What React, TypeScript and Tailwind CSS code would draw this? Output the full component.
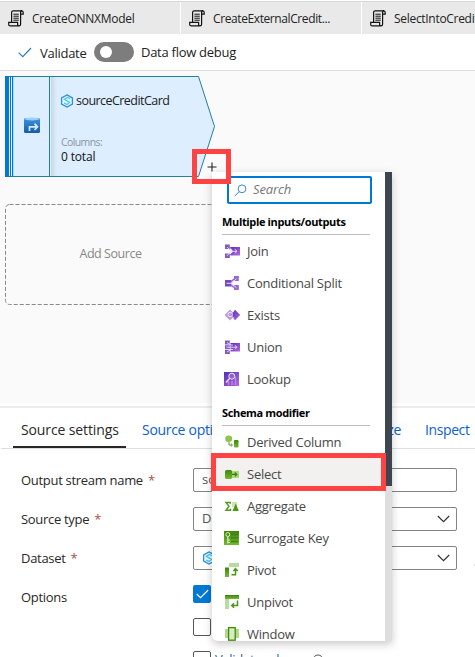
import React from "react";

function ScrollIcon() {
  return (
    <svg width="16" height="17" viewBox="0 0 16 17" className="shrink-0" fill="none" stroke="#111" strokeWidth="1.2">
      <path d="M3.6 12V2.6Q3.6 .9 5.2.9H13.6Q15.2.9 15.2 2.4V4.2H12.6V14.2Q12.6 15.9 11 15.9H2.2Q.7 15.9.7 14.4V12.4H9.6V14.4Q9.7 15.9 11 15.9M12.6 4.2V2.2Q12.8 1 13.8.9" />
      <path d="M5.4 4.2H10.8M5.4 6.2H10.8M5.4 8.2H10.8M5.4 10.2H10.8" strokeWidth="1" />
    </svg>
  );
}

function HexIcon() {
  return (
    <svg width="14" height="14" viewBox="0 0 14 14" className="shrink-0" fill="none">
      <path d="M7 .9L12.4 3.9V10.1L7 13.1L1.6 10.1V3.9Z" fill="#e3f6ff" stroke="#2f8fdc" strokeWidth="1.3" />
      <path d="M9.9 4.7L7.4 3.4L4.4 5.2L9.6 8.4L7 10.5L4.2 9.2" stroke="#45c8ee" strokeWidth="1.3" />
    </svg>
  );
}

function Chevron() {
  return (
    <svg width="13" height="8" viewBox="0 0 13 8" fill="none" stroke="#333" strokeWidth="1.2">
      <path d="M.8 1L6.5 6.7L12.2 1" />
    </svg>
  );
}

type IconName =
  | "join" | "split" | "exists" | "union" | "lookup" | "derived"
  | "select" | "aggregate" | "key" | "pivot" | "unpivot" | "window";

const drawings: Record<IconName, React.ReactNode> = {
  join: (
    <>
      <path d="M5 3H15V11.5H5L8 7.3Z" fill="url(#vio)" />
      <path d="M0 .5H4.8V5H0ZM0 9.5H4.8V14H0Z" fill="#8259cb" />
      <path d="M2 3L6 7.3H12M2 11.8L6 7.3M9.8 5.2L12 7.3L9.8 9.4" stroke="#e8d5fb" strokeWidth="1" fill="none" />
      <path d="M4.8 3.5L8 6M4.8 11L8 8.6" stroke="#8259cb" fill="none" />
    </>
  ),
  split: (
    <>
      <path d="M0 4H6.5V10.5H0Z" fill="#7246c4" />
      <path d="M9 0H13.8V5H9ZM9 9H13.8V14H9Z" fill="#9865d2" />
      <path d="M6 6L9 3M6 9L9 11.5" stroke="#9865d2" strokeWidth="1.6" />
      <path d="M1.5 7.3H6L11.5 2.8M6 7.3L11.5 11.8" stroke="#eadbfc" strokeWidth="1" fill="none" />
    </>
  ),
  exists: (
    <>
      <path d="M5 1.5L10.5 7L5 12.5L-.5 7Z" fill="#b99be2" />
      <path d="M10 1.8L15.2 7L10 12.2L6 7.5Z" fill="url(#vio)" />
      <circle cx="5.2" cy="6.5" r="2.2" fill="none" stroke="#eee4fc" />
      <path d="M6.8 8.2L9 10.5" stroke="#eee4fc" />
    </>
  ),
  union: (
    <>
      <path d="M5.5 3H15V11.5H5.5Z" fill="url(#vio)" />
      <path d="M0 .5H4.8V4.4H0ZM0 5.3H4.8V9.2H0ZM0 10.1H4.8V14H0Z" fill="#8259cb" />
      <path d="M2 2.6L6 5H8M1.5 7.2H12M2 12L6 9.4H8M9.8 5.1L12 7.2L9.8 9.4" stroke="#e8d5fb" strokeWidth="1" fill="none" />
    </>
  ),
  lookup: (
    <>
      <rect x="-1" y="0" width="15" height="14" fill="url(#vio)" />
      <path d="M3.5 9V13M7 9V13M10.5 5V13" stroke="#bd86e8" strokeWidth="1.5" />
      <circle cx="6.8" cy="4.2" r="3" fill="#8e65cd" stroke="#f0e6fc" />
      <path d="M4.6 6.4L1 10.5" stroke="#f0e6fc" strokeWidth="1.3" />
    </>
  ),
  derived: (
    <>
      <ellipse cx="3.7" cy="3.7" rx="3.5" ry="3.2" fill="#8ac64e" />
      <path d="M4 7V10H7M5.8 8.5L7.5 10L5.8 11.5" stroke="#62982c" fill="none" />
      <rect x="9" y="5" width="4.5" height="7.5" rx="1" fill="url(#grn)" />
    </>
  ),
  select: (
    <>
      <rect x="6" y="4" width="8" height="7" fill="#a9d77c" />
      <rect x="0" y="3" width="7" height="9" rx="1.5" fill="url(#grn)" />
      <path d="M7 7.4H11.5M9.8 5.4L11.8 7.4L9.8 9.4" stroke="#397d0a" strokeWidth="1.2" fill="none" />
    </>
  ),
  aggregate: (
    <>
      <path d="M5.3 4.7V3.5H1L4 7.3L1 11.2H5.5V9.7" fill="none" stroke="#559d20" strokeWidth="1.5" />
      <path d="M7 3H12V8H7Z" fill="#c9e6b5" />
      <path d="M10.8 4.5L13.8 12H7.5Z" fill="#4a9b14" />
    </>
  ),
  key: (
    <>
      <rect x="-1" y="0" width="15" height="14" fill="url(#grn)" />
      <path d="M6 3.5H13M6 7H13M6 10.5H13" stroke="#3d840c" strokeWidth="1.5" />
      <circle cx="2.8" cy="3.5" r="2" fill="none" stroke="#d8f1bd" />
      <path d="M2.8 5.5V12.5M2.8 9H5M2.8 11.5H5" stroke="#d8f1bd" strokeWidth="1.2" />
    </>
  ),
  pivot: (
    <>
      <rect x="4" y="0" width="10" height="4" fill="#b8dca0" />
      <rect x="0" y="4.5" width="4" height="9.5" fill="url(#grn)" />
      <path d="M6.5 11.7H10.5V6M8.4 8L10.5 5.7L12.7 8" stroke="#4d931c" strokeWidth="1.5" fill="none" />
    </>
  ),
  unpivot: (
    <>
      <rect x="0" y="0" width="14" height="4" fill="url(#grn)" />
      <rect x="0" y="4" width="4" height="10" fill="#b8dca0" />
      <path d="M12.5 5.5V10.5H7M9 8.3L6.8 10.5L9 12.7" stroke="#4d931c" strokeWidth="1.5" fill="none" />
    </>
  ),
  window: (
    <>
      <rect x="0" y="2" width="14" height="9" fill="#b2d88b" />
      <rect x="3.6" y=".6" width="6.6" height="12.6" fill="#d5edbe" stroke="#3f890d" strokeWidth="1.3" />
    </>
  ),
};

function MenuItem({ icon, label, active }: { icon: IconName; label: string; active?: boolean }) {
  return (
    <div className={`flex h-8 shrink-0 items-center pl-[13px] text-[13px] tracking-[-0.25px] text-[#484848] ${active ? "bg-[#f3f1f0]" : ""}`}>
      <svg width="15" height="15" viewBox="0 0 15 15" className="mr-[7px] shrink-0 overflow-visible">{drawings[icon]}</svg>
      <span className="pt-px">{label}</span>
    </div>
  );
}

function Heading({ children }: { children: React.ReactNode }) {
  return (
    <div className="ml-[10px] h-[25px] w-[148px] shrink-0 border-b border-[#bdbdbd] text-[11px] leading-6 font-bold tracking-[-0.35px] text-black">
      {children}
    </div>
  );
}

function TransformMenu() {
  return (
    <div className="absolute top-[172px] left-[212px] flex h-[469px] w-[180px] overflow-hidden rounded-bl-md bg-white shadow-[0_3px_8px_rgba(0,0,0,0.22)]">
      <div className="flex w-[173px] flex-col">
        <div className="mt-[4px] mb-[6px] ml-[15px] flex h-[28px] w-[145px] shrink-0 items-center rounded-[2px] border-2 border-[#0078d4] pl-[5px]">
          <svg width="13" height="13" viewBox="0 0 13 13" fill="none" stroke="#3689d3">
            <circle cx="8" cy="4.8" r="3.9" />
            <path d="M5.2 7.6L.7 12.2" />
          </svg>
          <span className="ml-[6px] text-[13px] tracking-[-0.15px] text-[#777] italic">Search</span>
        </div>
        <Heading>Multiple inputs/outputs</Heading>
        <MenuItem icon="join" label="Join" />
        <MenuItem icon="split" label="Conditional Split" />
        <MenuItem icon="exists" label="Exists" />
        <MenuItem icon="union" label="Union" />
        <MenuItem icon="lookup" label="Lookup" />
        <div className="h-[6px] shrink-0" />
        <Heading>Schema modifier</Heading>
        <MenuItem icon="derived" label="Derived Column" />
        <MenuItem icon="select" label="Select" active />
        <MenuItem icon="aggregate" label="Aggregate" />
        <MenuItem icon="key" label="Surrogate Key" />
        <MenuItem icon="pivot" label="Pivot" />
        <MenuItem icon="unpivot" label="Unpivot" />
        <MenuItem icon="window" label="Window" />
      </div>
      <div className="w-[7px] bg-[#dedede]">
        <div className="h-[314px] bg-[#3d4650]" />
      </div>
    </div>
  );
}

function FileTab({ label, className }: { label: string; className: string }) {
  return (
    <div className={`flex w-[181px] shrink-0 items-center border-r border-white bg-[#e9e9e9] pl-2 text-[12px] whitespace-nowrap ${className}`}>
      <ScrollIcon />
      <span className="ml-2 pt-[2px]">{label}</span>
    </div>
  );
}

function SourceNode() {
  return (
    <div className="absolute top-[5px] left-[5px] h-[102px] w-[211px]">
      <svg width="211" height="102" viewBox="0 0 211 102" className="absolute inset-0">
        <path d="M.5 .5H193.5L209.5 50.5L193.5 100.5H.5Z" fill="#dceeff" stroke="#237f9f" />
        <path d="M0 0H4V101H0ZM5 0H6V101H5ZM7 0H8.2V101H7Z" fill="#0078d4" />
        <path d="M4.5 1V100M6.5 1V100" stroke="#d9edff" />
        <path d="M46 1H52V100H46Z" fill="url(#shade)" />
        <path d="M44.5 1V100" stroke="#237f9f" />
        <rect x="19" y="42" width="16" height="15" rx="1.5" fill="url(#db)" />
        <ellipse cx="27" cy="43" rx="7.5" ry="1.4" fill="#9bd0f5" />
        <path d="M24.5 55V50.8H32M29.5 47.7L32.5 50.8L29.5 53.8" fill="none" stroke="#d5ebfb" strokeWidth="1.7" />
      </svg>
      <div className="relative flex flex-col pt-[16px] pl-[55px]">
        <div className="flex h-[18px] items-center gap-[2px] text-[12.5px] text-[#222]">
          <HexIcon />
          <span className="tracking-[-0.55px]">sourceCreditCard</span>
        </div>
        <span className="mt-[25px] ml-px text-[10.5px] leading-[14px] tracking-[-0.6px] text-[#8b949c]">Columns:</span>
        <span className="ml-px text-[12px] leading-[15px] tracking-[-0.15px] text-[#111]">0 total</span>
      </div>
    </div>
  );
}

function Field({ label, required, children }: { label: string; required?: boolean; children: React.ReactNode }) {
  return (
    <div className="flex h-[39px] shrink-0 items-start">
      <div className="w-[172px] text-[13px] leading-[25px] tracking-[-0.3px] text-[#292827]">
        {label}
        {required && <span className="ml-[5px] text-[#a4514d]">*</span>}
      </div>
      {children}
    </div>
  );
}

function Box({ children }: { children: React.ReactNode }) {
  return (
    <div className="flex h-6 w-[264px] items-center justify-between rounded-[2px] border border-[#858483] pr-[6px] pl-[8px] text-[13px] text-[#555]">
      {children}
    </div>
  );
}

export default function App() {
  return (
    <div className="relative flex h-[657px] w-[475px] flex-col overflow-hidden bg-white font-['Open_Sans',sans-serif] text-[13px] text-[#222]">
      <svg width="0" height="0" className="absolute">
        <defs>
          <linearGradient id="vio" x1="0" y1="0" x2="1" y2="1"><stop stopColor="#5330b5" /><stop offset="1" stopColor="#b468dc" /></linearGradient>
          <linearGradient id="grn" x1="0" y1="0" x2="0" y2="1"><stop stopColor="#3e850d" /><stop offset="1" stopColor="#77b832" /></linearGradient>
          <linearGradient id="db" x1="0" y1="0" x2="0" y2="1"><stop stopColor="#3c91df" /><stop offset="1" stopColor="#155dab" /></linearGradient>
          <linearGradient id="shade"><stop stopColor="#c8d7e4" /><stop offset="1" stopColor="#dceeff" /></linearGradient>
        </defs>
      </svg>

      <div className="mt-px flex h-[33px] shrink-0 border-t border-[#d5d8d7]">
        <FileTab label="CreateONNXModel" className="tracking-[-0.25px]" />
        <FileTab label="CreateExternalCredit..." className="tracking-[-0.4px]" />
        <FileTab label="SelectIntoCreditCard" className="tracking-[-0.3px]" />
      </div>

      <div className="flex h-[36px] shrink-0 items-center pl-[18px] tracking-[-0.27px]">
        <svg width="14" height="11" viewBox="0 0 14 11" fill="none" stroke="#287bcb" strokeWidth="1.2"><path d="M.6 5.6L4.8 9.7L13 1" /></svg>
        <span className="ml-[8px] w-[54px] pt-[3px]">Validate</span>
        <div className="flex h-5 w-10 items-center rounded-full bg-[#7d7d7d] pl-[6px]"><div className="size-3 rounded-full bg-white" /></div>
        <span className="ml-[7px] pt-px">Data flow debug</span>
      </div>

      <div className="relative h-[333px] shrink-0 border-t border-[#dedede] bg-[#fafafa]">
        <SourceNode />
        <div className="absolute top-[133px] left-[5px] flex h-[101px] w-[211px] items-center justify-center text-[12.5px] tracking-[-0.45px] text-[#888]">
          <svg width="211" height="101" className="absolute inset-0"><rect x=".5" y=".5" width="209" height="100" rx="4" fill="none" stroke="#8a8a8a" strokeDasharray="4 2" /></svg>
          Add Source
        </div>
      </div>

      <div className="mt-[3px] h-[2px] shrink-0 bg-[#ececec]" />
      <div className="ml-px flex h-[41px] shrink-0 border-b border-[#dedede] pl-[12px] text-[14px] leading-[44px] text-[#0b62d0]">
        <div className="h-[40px] w-[113px] shrink-0 border-b-2 border-[#292827] pl-2 tracking-[-0.12px] text-[#292827]">Source settings</div>
        <div className="ml-4 w-[145px] shrink-0 tracking-[-0.3px] whitespace-nowrap">Source options</div>
        <div className="w-[114px] shrink-0 text-right tracking-[-0.3px]">Optimize</div>
        <div className="ml-[24px] shrink-0 tracking-[-0.4px]">Inspect</div>
      </div>

      <div className="flex flex-col pt-[19px] pl-[21px]">
        <Field label="Output stream name" required><Box>sourceCreditCard</Box></Field>
        <Field label="Source type" required><Box>Dataset<Chevron /></Box></Field>
        <Field label="Dataset" required><Box><HexIcon /><Chevron /></Box></Field>
        <div className="flex">
          <div className="w-[172px] text-[13px] leading-[25px] tracking-[-0.3px] text-[#292827]">Options</div>
          <div className="flex flex-col gap-[15px]">
            <div className="flex size-[18px] items-center justify-center rounded-[2px] bg-[#0078d4]">
              <svg width="13" height="10" viewBox="0 0 13 10" fill="none" stroke="white" strokeWidth="1.1"><path d="M.7 5L4.5 8.7L12.2 1" /></svg>
            </div>
            <div className="size-[18px] rounded-[2px] border border-[#555]" />
            <div className="flex h-[18px] items-center">
              <div className="size-[18px] shrink-0 rounded-[2px] border border-[#555]" />
              <span className="ml-1 w-[97px] shrink-0 tracking-[-0.3px] whitespace-nowrap text-[#2a62b0]">Validate schema</span>
              <svg width="13" height="13" viewBox="0 0 13 13" className="shrink-0" fill="none" stroke="#555"><circle cx="6" cy="6" r="5" /></svg>
            </div>
          </div>
        </div>
      </div>

      <TransformMenu />
      <div className="absolute top-[453px] left-[211px] h-[38px] w-[175px] border-[5px] border-[#ff4343]" />
      <div className="absolute top-[149px] left-[192px] h-[35px] w-[39px] border-[5px] border-[#ff4343]" />
      <svg width="10" height="10" className="absolute top-[162px] left-[207px]" stroke="#222" strokeWidth="1.1"><path d="M5 .5V9.5M.5 5H9.5" /></svg>
      <div className="absolute top-[564px] left-[474px] h-[2px] w-px bg-[#dcdcdc]" />
    </div>
  );
}
